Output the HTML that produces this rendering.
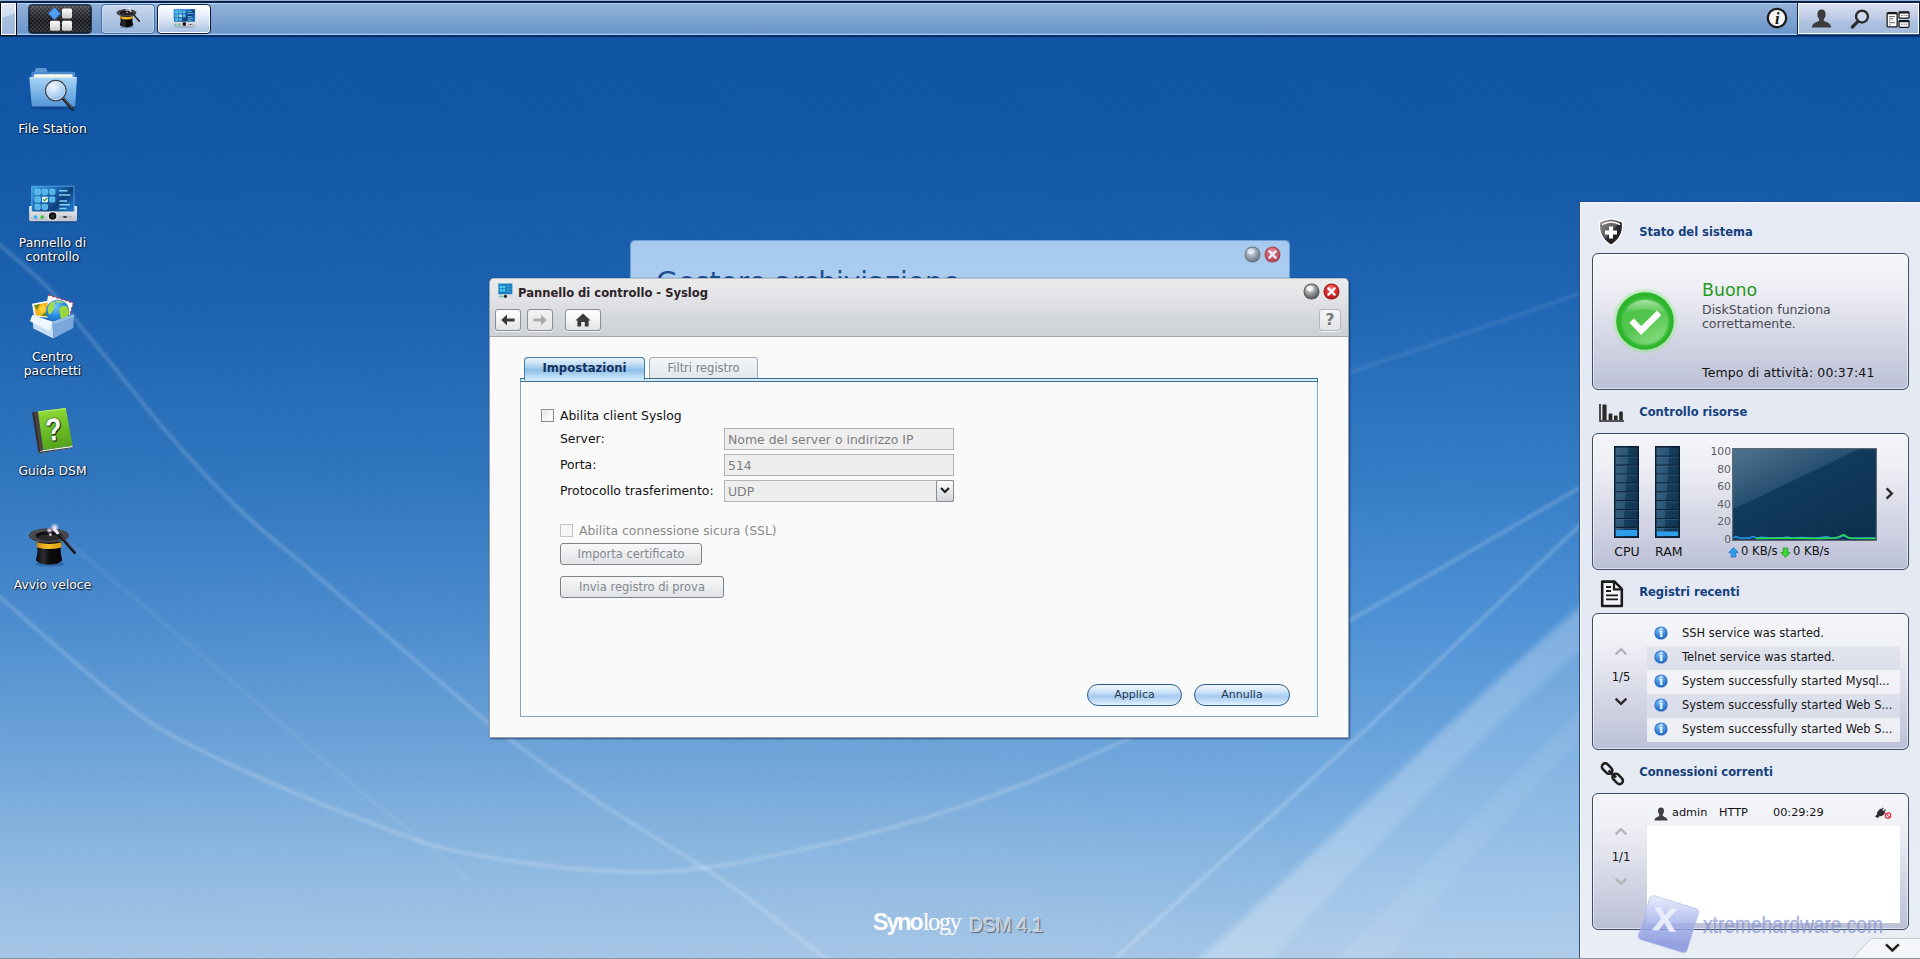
<!DOCTYPE html>
<html lang="it">
<head>
<meta charset="utf-8">
<title>Synology DiskStation</title>
<style>
*{box-sizing:border-box;margin:0;padding:0}
html,body{width:1920px;height:959px;overflow:hidden}
body{position:relative;font-family:"DejaVu Sans","Liberation Sans",sans-serif;font-size:12px;color:#111;
background:linear-gradient(180deg,#0e53a3 0px,#0f56a6 120px,#1a61b0 300px,#2f76c0 480px,#4b8ccf 620px,#70a6da 760px,#93bce3 880px,#a6c7e8 959px);}
.abs{position:absolute}
#stripes{position:absolute;left:0;top:0;width:1920px;height:959px;background:repeating-linear-gradient(135deg,rgba(255,255,255,0.035) 0 2px,rgba(0,0,0,0.03) 2px 4px);}
#bottomline{position:absolute;left:0;top:957.6px;width:1920px;height:2px;background:#8d939d;z-index:50}
/* taskbar */
#taskbar{position:absolute;left:0;top:0;width:1920px;height:38px;background:linear-gradient(180deg,#98aed0 0,#98aed0 1px,#06224a 1.1px,#06224a 2.8px,#b8d6f8 3px,#b8d6f8 4.2px,#93b1d8 4.5px,#80a4d2 18px,#6a96ca 33.4px,#a8ccf4 33.7px,#a8ccf4 34.9px,#06285a 35.2px,#07306a 36.4px,rgba(10,60,130,0.5) 37px,rgba(10,60,130,0) 38px);}

#stripes{background:repeating-linear-gradient(45deg,rgba(255,255,255,0.018) 0 1.5px,rgba(0,0,0,0.016) 1.5px 3px) !important}
.tb{position:absolute;top:4px;height:30px;border-radius:4px}
#showdesk{position:absolute;left:0;top:3px;width:17px;height:33px;border:1px solid #05070c;border-top:none;background:#fff;padding:1px}
#showdesk i{display:block;width:100%;height:100%;background:linear-gradient(160deg,#dfe8f4 0%,#cfdcee 40%,#a9c0e0 41%,#9db7db 100%)}
#mainbtn{left:28px;width:64px;border:1px solid #1d3a66;background:linear-gradient(180deg,#5a5d62 0,#3a3c40 20%,#1c1d20 55%,#2a2c30 100%);box-shadow:inset 0 0 2px #000}
#mainbtn .chk{position:absolute;left:1px;top:1px;right:1px;bottom:1px;border-radius:3px;background:repeating-conic-gradient(rgba(255,255,255,0.09) 0 25%,rgba(0,0,0,0.12) 0 50%) 0 0/4px 4px}
.tbb{border:1px solid #466ea8;background:linear-gradient(180deg,#c9d9ee 0,#b3c8e6 45%,#9ab6dc 100%);box-shadow:inset 0 0 0 1px rgba(255,255,255,0.35)}
.tbb.act{border:1px solid #0b1f45;background:linear-gradient(180deg,#ffffff 0,#e6edf8 40%,#a8c0e2 100%);box-shadow:inset 0 0 0 1px #fff}
#tray{border-bottom:1px solid #2c4f86;position:absolute;left:1797px;top:3px;width:123px;height:32px;border-left:1px solid #10244a;border-right:1px solid #10244a;background:#fff;padding:1px}
#tray i{display:block;width:100%;height:100%;background:linear-gradient(180deg,#d9dff0 0,#c3cfe7 40%,#a9bfdf 70%,#a3badb 100%)}

.dicon{position:absolute;left:0;width:105px;text-align:center;color:#fff;font-size:12.35px;line-height:14px;text-shadow:1px 1px 1px #0a1a30,0 0 2px rgba(0,10,40,0.8)}
.dicon svg{display:block;position:absolute;left:22px;top:0}
.dicon span{position:absolute;left:0;width:105px;top:62px;display:block}

/* back window */
#bwin{position:absolute;left:630px;top:240px;width:660px;height:60px;border-radius:5px 5px 0 0;background:linear-gradient(180deg,#a6c9ef 0,#aecff2 100%);border:1px solid #6e9fd6;border-bottom:none;overflow:hidden}
#bwin .t{position:absolute;left:25px;top:25.4px;font-size:28.03px;line-height:34px;color:#1d4f8e;white-space:nowrap;letter-spacing:0}
.orb{position:absolute;width:17px;height:17px}
/* front window */
#win{position:absolute;left:489px;top:278px;width:860px;height:460px;border-radius:5px 5px 0 0;background:#fafafa;border:1px solid #93a0b0;border-top-color:#b8bdc4;box-shadow:1px 1px 2px rgba(10,30,70,0.55),0 0 1px rgba(10,30,70,0.5)}
#whead{position:absolute;left:0;top:0;width:858px;height:58px;border-radius:4px 4px 0 0;background:linear-gradient(180deg,#e9ebed 0,#e1e3e6 35%,#d3d6da 75%,#cdd0d5 100%);border-bottom:1px solid #a4a8ae}
#wtitle{position:absolute;left:28px;top:6.6px;font-weight:bold;font-size:11.55px;line-height:14px;color:#2d2327;white-space:nowrap}
.nbtn{position:absolute;top:30px;height:22px;border:1px solid #8b8f94;border-radius:3px;background:linear-gradient(180deg,#ffffff 0,#f3f3f4 50%,#e2e3e5 100%);box-shadow:0 1px 0 rgba(255,255,255,0.7)}
#tabstrip{position:absolute;left:30px;top:99px;width:798px;height:4px;background:#cdeefd;border:1px solid #3e6c8a;border-left-color:#5b93b8}
#tpanel{position:absolute;left:30px;top:103px;width:798px;height:335px;border:1px solid #7fa6c2;border-top:none;background:#fafafa;box-shadow:inset -3px 0 0 #eef8fd}
.tab{position:absolute;top:78px;height:22px;border:1px solid #a3abb5;border-bottom:none;border-radius:4px 4px 0 0;font-size:11.45px;line-height:20px;text-align:center;white-space:nowrap}
.tab.on{left:34px;width:121px;font-size:11.65px;border-color:#3f7dab;background:linear-gradient(180deg,#eaf4fc 0,#c9e1f5 25%,#8dbfe9 55%,#b5d9f3 80%,#cfeefd 100%);font-weight:bold;color:#15305c;height:23px;z-index:2}
.tab.off{left:159px;width:109px;background:linear-gradient(180deg,#f3f5f8 0,#e9edf1 60%,#e0e5ea 100%);color:#7d838b}
.lbl{position:absolute;font-size:12.4px;line-height:16px;white-space:nowrap;color:#111}
.cb{position:absolute;width:13px;height:13px;border:1px solid #8e8f8f;background:linear-gradient(135deg,#dcdcdc 0,#f4f4f4 50%,#ffffff 100%);box-shadow:inset 0 0 0 1px #f4f4f4}
.inp{position:absolute;left:234px;width:230px;height:22px;border:1px solid #b3b4b8;background:#eeeeee;font-size:12.45px;line-height:20px;color:#7e7e82;padding:0.7px 0 0 3px;white-space:nowrap}
.gbtn{position:absolute;height:22px;border:1px solid #7f8388;border-radius:3px;background:linear-gradient(180deg,#f7f8f9 0,#eceef0 50%,#dfe2e6 100%);font-size:11.5px;line-height:20px;color:#84888e;text-align:center;white-space:nowrap}
.pbtn{position:absolute;top:405px;height:22px;border:1px solid #2d5d8f;border-radius:12px;background:linear-gradient(180deg,#f1f8fe 0,#d3e7f9 30%,#a5cbef 55%,#c2def6 80%,#e4f2fd 100%);font-size:11px;line-height:20px;color:#27374f;text-align:center;white-space:nowrap}

/* widget panel */
#wp{position:absolute;left:1579px;top:201px;width:342px;height:760px;border:1px solid #1b4b8b;border-left-color:#2c4c78;background:linear-gradient(180deg,#e5eaf4 0,#e3e8f3 50%,#e9edf4 100%);box-shadow:inset 1px 1px 0 #f6f8fc}
.wh{position:absolute;left:59.2px;font-weight:bold;font-size:11.5px;line-height:16px;color:#15407c;white-space:nowrap}
.wb{position:absolute;left:12px;width:317px;height:137px;border:1px solid #3d4d6b;border-radius:6px;background:linear-gradient(180deg,#f5f6fa 0,#eeeff5 25%,#d6d8e6 60%,#bcc0d6 100%);box-shadow:inset 0 0 0 1px rgba(255,255,255,0.55)}
.wt{position:absolute;white-space:nowrap;font-size:12.5px;line-height:16px;color:#111}
.s11{font-size:11.3px}
.row{position:absolute;left:54px;width:253px;height:24px}
.row svg{position:absolute;left:7px;top:4px}
.row span{position:absolute;left:35px;top:2.6px;font-size:11.45px;line-height:16px;color:#161616;white-space:nowrap}

#logo{position:absolute;left:873px;top:906.5px;white-space:nowrap;color:#fff;line-height:30px;height:30px}
#logo .a{font-family:"Liberation Sans",sans-serif;font-weight:bold;font-size:23px;letter-spacing:-1.9px}
#logo .b{font-family:"Liberation Serif",serif;font-size:24.5px;letter-spacing:-1.5px;margin-left:1px}
#logo .c{font-family:"Liberation Sans",sans-serif;font-size:19.5px;letter-spacing:-0.3px;color:#c3ccd9;text-shadow:1px 1px 1px #54627a,-1px -1px 0 rgba(255,255,255,0.55);margin-left:9px;position:relative;top:2px}
</style>
</head>
<body>
<div id="stripes"></div>
<svg id="swoosh" class="abs" style="left:0;top:0" width="1920" height="959" viewBox="0 0 1920 959" fill="none">
<defs><filter id="bl" x="-5%" y="-5%" width="110%" height="110%"><feGaussianBlur stdDeviation="1.6"/></filter><filter id="bl2" x="-5%" y="-5%" width="110%" height="110%"><feGaussianBlur stdDeviation="3"/></filter>
<radialGradient id="gLight" cx="1480" cy="640" r="560" gradientUnits="userSpaceOnUse" gradientTransform="translate(1480 640) scale(1 0.8) translate(-1480 -640)"><stop offset="0" stop-color="#5fb0ff" stop-opacity="0.16"/><stop offset="0.6" stop-color="#5fb0ff" stop-opacity="0.08"/><stop offset="1" stop-color="#5fb0ff" stop-opacity="0"/></radialGradient></defs>
<rect x="800" y="100" width="1120" height="859" fill="url(#gLight)"/>
<g filter="url(#bl)">
<path d="M-10 236 C-8 238 -10 236 0 245 C10 254 33 272 50 290 C67 308 81 327 100 350 C119 373 142 403 165 430 C188 457 216 487 240 510 C264 533 287 550 310 570 C333 590 357 610 380 630 C403 650 430 673 450 690 C470 707 475 713 500 732 C525 751 562 778 600 803 C638 828 687 856 725 882 C763 908 812 949 830 962" stroke="#fff" stroke-opacity="0.2" stroke-width="3.4"/>
<path d="M-20 580 C-17 583 -23 577 0 597 C23 617 87 674 120 700 C153 726 162 731 200 750 C238 769 304 798 350 815 C396 832 425 846 475 855 C525 864 596 873 650 872 C704 871 748 861 800 850 C852 839 906 825 960 807 C1014 789 1060 771 1125 740 C1190 709 1271 664 1350 620 C1429 576 1558 500 1600 476" stroke="#fff" stroke-opacity="0.2" stroke-width="3.6"/>
<path d="M65 540 C150 610 230 680 300 740 S420 840 470 880" stroke="#fff" stroke-opacity="0.07" stroke-width="3"/>
<path d="M1105 968 C1190 890 1270 818 1348 746 S1520 582 1600 506" stroke="#fff" stroke-opacity="0.22" stroke-width="3.4"/>
<path d="M1280 396 C1360 368 1480 330 1600 286" stroke="#fff" stroke-opacity="0.1" stroke-width="3"/>
</g>
<g filter="url(#bl2)">
<path d="M1190 968 C1340 830 1480 690 1600 590 L1600 968 Z" fill="#fff" fill-opacity="0.15"/>
<path d="M1190 968 L1262 968 C1390 830 1500 715 1600 634 L1600 590 C1480 690 1340 830 1190 968 Z" fill="#fff" fill-opacity="0.14"/>
<path d="M1330 968 L1380 968 C1450 880 1530 790 1600 720 L1600 690 C1500 790 1410 880 1330 968 Z" fill="#fff" fill-opacity="0.07"/>
</g>
</svg><div id="bottomline"></div><div id="logo"><span class="a">Syno</span><span class="b">logy</span><span class="c">DSM 4.1</span></div>
<div id="taskbar"></div>
<svg width="0" height="0" style="position:absolute">
<defs>
<linearGradient id="gFolderF" x1="0" y1="0" x2="0" y2="1"><stop offset="0" stop-color="#a9d3f5"/><stop offset="0.5" stop-color="#7db5e8"/><stop offset="1" stop-color="#5596d8"/></linearGradient>
<linearGradient id="gPaper" x1="0" y1="0" x2="0" y2="1"><stop offset="0" stop-color="#fffdf0"/><stop offset="1" stop-color="#e9e3bf"/></linearGradient>
<radialGradient id="gLens" cx="0.35" cy="0.3" r="0.8"><stop offset="0" stop-color="#ffffff" stop-opacity="0.92"/><stop offset="0.55" stop-color="#cfe4f7" stop-opacity="0.7"/><stop offset="1" stop-color="#9cc4ea" stop-opacity="0.55"/></radialGradient>
<linearGradient id="gScreen" x1="0" y1="0" x2="1" y2="0.6"><stop offset="0" stop-color="#3fa2e6"/><stop offset="0.45" stop-color="#1a6cb8"/><stop offset="0.75" stop-color="#0e3f7c"/><stop offset="1" stop-color="#1c6ab4"/></linearGradient>
<linearGradient id="gBase" x1="0" y1="0" x2="0" y2="1"><stop offset="0" stop-color="#f4f4f6"/><stop offset="1" stop-color="#bfc1c9"/></linearGradient>
<linearGradient id="gBook" x1="0" y1="0" x2="0.2" y2="1"><stop offset="0" stop-color="#97de3c"/><stop offset="0.5" stop-color="#72c228"/><stop offset="1" stop-color="#56a41c"/></linearGradient>
<radialGradient id="gGlobe" cx="0.4" cy="0.3" r="0.8"><stop offset="0" stop-color="#7cc8f8"/><stop offset="0.5" stop-color="#2a8be0"/><stop offset="1" stop-color="#145cb0"/></radialGradient>
<linearGradient id="gHatBody" x1="0" y1="0" x2="1" y2="0"><stop offset="0" stop-color="#0a0a0c"/><stop offset="0.3" stop-color="#2c2e34"/><stop offset="0.5" stop-color="#0c0c0e"/><stop offset="1" stop-color="#050506"/></linearGradient>
<linearGradient id="gBand" x1="0" y1="0" x2="1" y2="0"><stop offset="0" stop-color="#c98a10"/><stop offset="0.4" stop-color="#f6c02c"/><stop offset="1" stop-color="#d9980f"/></linearGradient>
<radialGradient id="gSpark" cx="0.5" cy="0.5" r="0.5"><stop offset="0" stop-color="#ffffff" stop-opacity="1"/><stop offset="0.4" stop-color="#f0d8ff" stop-opacity="0.7"/><stop offset="1" stop-color="#ffffff" stop-opacity="0"/></radialGradient>

<radialGradient id="gOrbG" cx="0.4" cy="0.3" r="0.75"><stop offset="0" stop-color="#f2f2f2"/><stop offset="0.35" stop-color="#b2b4b6"/><stop offset="1" stop-color="#505254"/></radialGradient>
<radialGradient id="gOrbR" cx="0.45" cy="0.3" r="0.8"><stop offset="0" stop-color="#ff8d8d"/><stop offset="0.4" stop-color="#e33838"/><stop offset="1" stop-color="#a81414"/></radialGradient>

<radialGradient id="gOK" cx="0.5" cy="0.35" r="0.7"><stop offset="0" stop-color="#8ee27a"/><stop offset="0.45" stop-color="#3fc032"/><stop offset="1" stop-color="#1da018"/></radialGradient>
<radialGradient id="gOKglow" cx="0.5" cy="0.5" r="0.5"><stop offset="0.84" stop-color="#a6f09c" stop-opacity="0.75"/><stop offset="1" stop-color="#7be46c" stop-opacity="0"/></radialGradient>
<radialGradient id="gInfo" cx="0.45" cy="0.3" r="0.8"><stop offset="0" stop-color="#9fd0fa"/><stop offset="0.5" stop-color="#3f8ee0"/><stop offset="1" stop-color="#1b5cb8"/></radialGradient>
<linearGradient id="gShield" x1="0" y1="0" x2="1" y2="1"><stop offset="0" stop-color="#8c8c8e"/><stop offset="0.5" stop-color="#5a5a5c"/><stop offset="0.52" stop-color="#2a2a2c"/><stop offset="1" stop-color="#1c1c1e"/></linearGradient>
<linearGradient id="gGraph" x1="0" y1="0" x2="0.75" y2="1"><stop offset="0" stop-color="#4f7590"/><stop offset="0.42" stop-color="#274f6f"/><stop offset="0.43" stop-color="#113a5b"/><stop offset="1" stop-color="#0c3150"/></linearGradient>
<linearGradient id="gBar" x1="0" y1="0" x2="1" y2="0.25"><stop offset="0" stop-color="#3a6280"/><stop offset="0.55" stop-color="#2a5474"/><stop offset="0.56" stop-color="#163e5e"/><stop offset="1" stop-color="#123654"/></linearGradient>
</defs>
<symbol id="icInfo" viewBox="0 0 14 14"><circle cx="7" cy="7" r="6.6" fill="#2a68c0"/><circle cx="7" cy="7" r="6" fill="url(#gInfo)"/><text x="7" y="11" text-anchor="middle" font-family="Liberation Serif,serif" font-weight="bold" font-size="11.5" fill="#fff">i</text></symbol>
<symbol id="chevU" viewBox="0 0 14 9"><path d="M1.6 7.4 L7 2.2 L12.4 7.4" fill="none" stroke="currentColor" stroke-width="2.4" stroke-linejoin="miter"/></symbol>
<symbol id="chevD" viewBox="0 0 14 9"><path d="M1.6 1.6 L7 6.8 L12.4 1.6" fill="none" stroke="currentColor" stroke-width="2.4" stroke-linejoin="miter"/></symbol>
<symbol id="meter" viewBox="0 0 26 92"><rect x="0" y="0" width="26" height="92" fill="#0a1d30"/><rect x="1.5" y="1.5" width="23" height="89" fill="url(#gBar)"/><path d="M1.5 10.2H24.5M1.5 19.1H24.5M1.5 28H24.5M1.5 36.9H24.5M1.5 45.8H24.5M1.5 54.7H24.5M1.5 63.6H24.5M1.5 72.5H24.5M1.5 81.4H24.5" stroke="#0b2238" stroke-width="1.2"/><path d="M1.5 11.2H24.5M1.5 20.1H24.5M1.5 29H24.5M1.5 37.9H24.5M1.5 46.8H24.5M1.5 55.7H24.5M1.5 64.6H24.5M1.5 73.5H24.5M1.5 82.4H24.5" stroke="#4b7290" stroke-width="0.6" opacity="0.7"/></symbol>

<symbol id="orbG" viewBox="0 0 17 17"><circle cx="8.5" cy="8.5" r="8" fill="#54575a"/><circle cx="8.5" cy="8.5" r="7" fill="url(#gOrbG)"/><ellipse cx="7" cy="5.6" rx="3.4" ry="2.6" fill="#fff" opacity="0.75"/></symbol>
<symbol id="orbR" viewBox="0 0 17 17"><circle cx="8.5" cy="8.5" r="8" fill="#a01818"/><circle cx="8.5" cy="8.5" r="7" fill="url(#gOrbR)"/><path d="M5.4 5.4 L11.6 11.6 M11.6 5.4 L5.4 11.6" stroke="#fff" stroke-width="2.3" stroke-linecap="round"/></symbol>
<symbol id="icCtlS" viewBox="0 0 17 17"><rect x="1.5" y="0.8" width="13.6" height="11" fill="#1c7aba" stroke="#4aa4dc" stroke-width="0.6"/><path d="M3 3h2v2h-2zM6 3h2v2h-2zM3 6.4h2v2h-2zM6 6.4h2v2h-2zM9.6 3.4h4M9.6 6h4M9.6 8.6h4" fill="#46d2f2" stroke="#46d2f2" stroke-width="0.6"/><rect x="0.6" y="11.2" width="15.4" height="4.2" rx="0.8" fill="#dcdde2"/><circle cx="8.4" cy="13.2" r="1.5" fill="#18181a"/><circle cx="3.2" cy="13.4" r="0.8" fill="#35b0ee"/><circle cx="5.3" cy="13.4" r="0.8" fill="#3cc63e"/></symbol>

<symbol id="icFile" viewBox="0 0 60 60">
<ellipse cx="31" cy="47.5" rx="23" ry="1.8" fill="#062a5c" opacity="0.35"/>
<path d="M12.6 12.5 L13.4 8.8 Q13.6 8 14.6 8 L23.4 8 Q24.3 8 24.6 8.9 L25.6 12.5 Z" fill="#5c9ad6"/>
<rect x="9.4" y="11.8" width="43.8" height="30" rx="1.6" fill="#4b8cd0"/>
<rect x="12" y="14.2" width="38.6" height="7" rx="1.2" fill="url(#gPaper)"/>
<path d="M7.3 17.6 Q7.2 17.2 7.8 17.2 L54.6 17.2 Q55.1 17.2 55 17.8 L53.2 45.4 Q53.1 46.4 52.2 46.4 L10.8 46.4 Q9.9 46.4 9.8 45.4 Z" fill="url(#gFolderF)"/>
<path d="M7.8 17.7 L54.6 17.7" stroke="#d6ecfc" stroke-width="0.8"/>
<line x1="41" y1="38.5" x2="50.6" y2="49.2" stroke="#1c1c24" stroke-width="2.9" stroke-linecap="round"/>
<line x1="41.6" y1="38.4" x2="50.4" y2="48.2" stroke="#8a8a98" stroke-width="0.8" stroke-linecap="round"/>
<circle cx="33.8" cy="30.6" r="10.2" fill="url(#gLens)"/>
<circle cx="33.8" cy="30.6" r="10.2" fill="none" stroke="#3b404c" stroke-width="1.3"/>
<circle cx="33.8" cy="30.6" r="9.2" fill="none" stroke="#e8eef6" stroke-width="0.7" opacity="0.9"/>
</symbol>
<symbol id="icCtl" viewBox="0 0 60 60">
<ellipse cx="31" cy="47.6" rx="24" ry="1.5" fill="#062a5c" opacity="0.35"/>
<rect x="9.7" y="12.2" width="42.3" height="26.5" fill="url(#gScreen)" stroke="#58aee8" stroke-width="0.8"/>
<g fill="#49b3e6" stroke="#8fd6f6" stroke-width="0.7">
<rect x="13.2" y="15.3" width="5" height="5" rx="0.8"/><rect x="20.4" y="15.3" width="5" height="5" rx="0.8"/><rect x="27.8" y="15.3" width="5" height="5" rx="0.8"/>
<rect x="13.2" y="23" width="5" height="5" rx="0.8"/><rect x="27.8" y="23" width="5" height="5" rx="0.8"/>
<rect x="13.2" y="30.4" width="5" height="5" rx="0.8"/><rect x="20.4" y="30.4" width="5" height="5" rx="0.8"/>
</g>
<rect x="20.2" y="22.8" width="5.6" height="5.4" rx="0.8" fill="#f2fbff"/>
<path d="M21.3 25.3 L22.7 26.9 L25 23.9" fill="none" stroke="#1f8a3c" stroke-width="1.2"/>
<g stroke="#86d3f6" stroke-width="1.5"><path d="M37 16.7H45.5M37 20.9H48.5M37.4 27H45M37.4 30.8H48M37.4 34.5H44.5"/></g>
<path d="M7.2 33 Q7.2 32 8.2 32 L9.6 32 L9.6 37.6 L52.4 37.6 L52.4 32 L54 32 Q55 32 55 33 L55 46 Q55 47.2 53.8 47.2 L8.4 47.2 Q7.2 47.2 7.2 46 Z" fill="url(#gBase)"/>
<circle cx="13.5" cy="43.1" r="1.9" fill="#35b0ee"/><circle cx="20.3" cy="43.1" r="1.9" fill="#3cc63e"/>
<circle cx="30.6" cy="42" r="4.7" fill="#f4f4f6"/><circle cx="30.6" cy="42" r="3.8" fill="#141416"/><circle cx="30.6" cy="42" r="1.6" fill="#2e2e33"/>
<path d="M37.8 42.9H50" stroke="#a9abb3" stroke-width="1.2"/><rect x="41.4" y="42.2" width="3.2" height="1.5" fill="#1a1a1e"/>
</symbol>
<symbol id="icPkg" viewBox="0 0 60 60">
<path d="M26.2 6.9 L51.3 15 L47.6 27 L24 18.5 Z" fill="#fbfbfd"/>
<path d="M26.2 6.9 L51.3 15" stroke="#d4283c" stroke-width="1.4" stroke-dasharray="2 2.4"/>
<path d="M51.3 15 L47.6 27" stroke="#d4283c" stroke-width="1.2" stroke-dasharray="2 2.4"/>
<path d="M10 15.8 L26.8 12.4 L28.4 30 L12.2 28.5 Z" fill="#fafafa"/>
<path d="M12 17.2 L25.5 14.4 L26.8 28.6 L13.6 27.4 Z" fill="#f4b81a"/>
<path d="M12 17.2 L18 16 L15 22 Z M19 27.8 L26.8 28.6 L26 22 Z" fill="#6e8c1c"/>
<path d="M17 20 L22 17 L24 22 L20 26 Z" fill="#ffd23a"/>
<circle cx="35.6" cy="23.3" r="11.6" fill="url(#gGlobe)"/>
<path d="M27 17 Q29 14 32.5 13.2 Q33.5 15.5 31.5 18 Q33 21 30 23.5 Q28.5 27 26.8 26 Q24.5 22 27 17 Z" fill="#a6dc48"/>
<path d="M38 19.5 Q41 16.5 45 18.5 Q47.8 22 46.5 27 Q44 31 40 31.5 Q37.5 30 38.5 26.5 Q36 23 38 19.5 Z" fill="#9cd63e"/>
<path d="M33 13 Q38 11.5 42 14.5 Q38.5 15.5 35.5 14.8 Z" fill="#b5e25c" opacity="0.8"/>
<path d="M10.3 26.9 L30.6 33.8 L31.3 50.6 L11.3 40.6 Z" fill="#c6def4"/>
<path d="M30.6 33.8 L51.9 26.2 L51.3 40 L31.3 50.6 Z" fill="#7aa8dc"/>
<path d="M30.6 33.8 L51.9 26.2 L51.8 29 L30.7 36.8 Z" fill="#94bce6"/>
<path d="M8 33.2 L10.3 26.9 L30.6 33.8 L27.6 43.2 Z" fill="#eef6fd"/>
</symbol>
<symbol id="icHelp" viewBox="0 0 60 60">
<path d="M16.5 50 L21.3 48.1 L50.6 43.8 L50.2 45.8 L17.2 51.2 Z" fill="#e9ebe6"/>
<path d="M16.5 50 L17.2 51.4 L50.3 46 L50.2 45.2 Z" fill="#3c3c3c"/>
<path d="M10.3 10.6 L16 9.4 L21.3 48.1 L16.5 50 Z" fill="#4b4242"/>
<path d="M10.3 10.6 L12 10.2 L17.8 49.4 L16.5 50 Z" fill="#2c2626"/>
<path d="M16 9.4 L43.8 6 L50.6 43.8 L21.3 48.1 Z" fill="url(#gBook)"/>
<path d="M16 9.4 L43.8 6 L44 7 L16.2 10.4 Z" fill="#b8ec6a"/>
<text transform="translate(32.6 38.2) rotate(-5) scale(0.84 1)" text-anchor="middle" font-family="Liberation Sans,sans-serif" font-weight="bold" font-size="31.5" fill="#fbfff4">?</text>
</symbol>
<symbol id="icHat" viewBox="0 0 60 60">
<ellipse cx="28" cy="48" rx="14" ry="2.4" fill="#062a5c" opacity="0.35"/>
<path d="M14.6 26 Q16.6 36 13.8 44.2 Q17 48.4 27 48.4 Q37 48.4 40.4 44.2 Q37.4 36 39.6 26 Z" fill="url(#gHatBody)"/>
<path d="M14.7 26.2 Q27 29.6 39.6 26.2 L39.4 31.6 Q27 34.6 15.2 31.6 Z" fill="url(#gBand)"/>
<ellipse cx="26.9" cy="19.6" rx="20" ry="7.3" fill="#3b3b3e"/>
<ellipse cx="26.9" cy="19.1" rx="19.4" ry="6.6" fill="#4a4a4e"/>
<ellipse cx="26.9" cy="19.8" rx="13.2" ry="4.6" fill="#111113"/>
<ellipse cx="26.9" cy="21.2" rx="11" ry="2.8" fill="#2a2a2d"/>
<line x1="35" y1="16.2" x2="52.6" y2="36.4" stroke="#0e0e10" stroke-width="2.9" stroke-linecap="round"/>
<line x1="35.8" y1="16.2" x2="52.6" y2="35.4" stroke="#6b6b72" stroke-width="0.8" stroke-linecap="round"/>
<line x1="32.6" y1="13.4" x2="35.6" y2="16.9" stroke="#efe2ff" stroke-width="3" stroke-linecap="round"/>
<circle cx="32.6" cy="11.6" r="4.6" fill="url(#gSpark)"/>
<circle cx="27.4" cy="14.4" r="3" fill="url(#gSpark)"/>
<circle cx="28.4" cy="18.6" r="2.2" fill="url(#gSpark)"/>
</symbol>
</svg>

<div class="dicon" style="top:60px"><svg width="60" height="60"><use href="#icFile"/></svg><span>File Station</span></div>
<div class="dicon" style="top:174px"><svg width="60" height="60"><use href="#icCtl"/></svg><span>Pannello di<br>controllo</span></div>
<div class="dicon" style="top:288px"><svg width="60" height="60"><use href="#icPkg"/></svg><span>Centro<br>pacchetti</span></div>
<div class="dicon" style="top:402px"><svg width="60" height="60"><use href="#icHelp"/></svg><span>Guida DSM</span></div>
<div class="dicon" style="top:516px"><svg width="60" height="60"><use href="#icHat"/></svg><span>Avvio veloce</span></div>

<div id="bwin"><div class="t">Gestore archiviazione</div>
<svg class="orb" style="left:613px;top:5px;opacity:0.72" viewBox="0 0 17 17"><use href="#orbG"/></svg>
<svg class="orb" style="left:633px;top:5px;opacity:0.72" viewBox="0 0 17 17"><use href="#orbR"/></svg>
</div>
<div id="win">
<div id="whead">
<svg class="abs" style="left:7px;top:4px" width="17" height="17"><use href="#icCtlS"/></svg>
<div id="wtitle">Pannello di controllo - Syslog</div>
<svg class="orb" style="left:813px;top:4px" viewBox="0 0 17 17"><use href="#orbG"/></svg>
<svg class="orb" style="left:833px;top:4px" viewBox="0 0 17 17"><use href="#orbR"/></svg>
<div class="nbtn" style="left:5px;width:26px"><svg width="24" height="20" viewBox="0 0 24 20"><path d="M5.2 10 L11 4.6 L11 8.4 L18.6 8.4 L18.6 11.6 L11 11.6 L11 15.4 Z" fill="#3a3a3c"/></svg></div>
<div class="nbtn" style="left:37px;width:26px;background:linear-gradient(180deg,#f4f4f5 0,#e4e5e7 100%)"><svg width="24" height="20" viewBox="0 0 24 20"><path d="M18.8 10 L13 4.6 L13 8.4 L5.4 8.4 L5.4 11.6 L13 11.6 L13 15.4 Z" fill="#a9abae"/></svg></div>
<div class="nbtn" style="left:75px;width:36px"><svg width="34" height="20" viewBox="0 0 34 20"><path d="M17 3.4 L24.6 10.6 L22.6 10.6 L22.6 16.4 L18.8 16.4 L18.8 12 L15.2 12 L15.2 16.4 L11.4 16.4 L11.4 10.6 L9.4 10.6 Z" fill="#3a3a3c"/></svg></div>
<div class="nbtn" style="left:829px;width:22px;background:linear-gradient(180deg,#f4f5f6 0,#e2e4e7 100%);border-color:#b4b8bd;font-weight:bold;font-size:16px;line-height:20px;text-align:center;color:#77797d">?</div>
</div>
<div class="tab on">Impostazioni</div>
<div class="tab off">Filtri registro</div>
<div id="tabstrip"></div>
<div id="tpanel"></div>
<div class="cb" style="left:51px;top:130px"></div>
<div class="lbl" style="left:70px;top:129px">Abilita client Syslog</div>
<div class="lbl" style="left:70px;top:152px">Server:</div>
<div class="inp" style="top:149px">Nome del server o indirizzo IP</div>
<div class="lbl" style="left:70px;top:178px">Porta:</div>
<div class="inp" style="top:175px">514</div>
<div class="lbl" style="left:70px;top:204px">Protocollo trasferimento:</div>
<div class="inp" style="top:201px">UDP<div style="position:absolute;right:-1px;top:-1px;width:18px;height:22px;border:1px solid #8a8d92;border-radius:2px;background:linear-gradient(180deg,#fdfdfd 0,#e6e7e9 55%,#d4d6d9 100%)"><svg width="16" height="20" viewBox="0 0 16 20"><path d="M4 7 L8 11 L12 7" fill="none" stroke="#222" stroke-width="2.2"/></svg></div></div>
<div class="cb" style="left:70px;top:245px;border-color:#c4c5c6;background:#f6f6f6"></div>
<div class="lbl" style="left:89px;top:244px;color:#8a8a8a">Abilita connessione sicura (SSL)</div>
<div class="gbtn" style="left:70px;top:264px;width:142px">Importa certificato</div>
<div class="gbtn" style="left:70px;top:297px;width:164px">Invia registro di prova</div>
<div class="pbtn" style="left:597px;width:95px">Applica</div>
<div class="pbtn" style="left:704px;width:96px">Annulla</div>
</div>

<div id="wp">
<svg class="abs" style="left:18px;top:15.4px" width="26" height="30" viewBox="0 0 26 30"><path d="M13 0.8 Q19 1.2 25.2 4.4 C26.4 16 22 23.5 13 29.2 C4 23.5 -0.4 16 0.8 4.4 Q7 1.2 13 0.8Z" fill="#fff" opacity="0.9"/><path d="M13 2.4 Q18.4 2.8 23.8 5.4 C24.8 15.4 21 22.2 13 27.4 C5 22.2 1.2 15.4 2.2 5.4 Q7.6 2.8 13 2.4Z" fill="url(#gShield)"/><path d="M3.8 7.6 Q13 2.4 22.2 7.6" fill="none" stroke="#fff" stroke-width="1.3"/><path d="M11 9.6H15V13.6H19V17.6H15V21.6H11V17.6H7V13.6H11Z" fill="#fff"/></svg>
<div class="wh" style="top:22px">Stato del sistema</div>
<div class="wb" style="top:51px">
<svg class="abs" style="left:13.4px;top:28.3px" width="78" height="78" viewBox="0 0 78 78"><defs><linearGradient id="gOKin" x1="0.2" y1="0" x2="0.8" y2="1"><stop offset="0" stop-color="#49c245"/><stop offset="0.5" stop-color="#55c650"/><stop offset="1" stop-color="#8cdf86"/></linearGradient><filter id="blOK" x="-10%" y="-10%" width="120%" height="120%"><feGaussianBlur stdDeviation="1.3"/></filter><linearGradient id="gOKgl" x1="0" y1="0" x2="0" y2="1"><stop offset="0" stop-color="#fff" stop-opacity="0.5"/><stop offset="1" stop-color="#fff" stop-opacity="0"/></linearGradient></defs><circle cx="39" cy="39" r="33" fill="url(#gOKglow)"/><circle cx="39" cy="39" r="28.8" fill="#2db52d"/><circle cx="39" cy="39.4" r="23.6" fill="url(#gOKin)" filter="url(#blOK)"/><path d="M18.5 32 A21 18 0 0 1 59.5 32 Q39 23 18.5 32Z" fill="url(#gOKgl)"/><path d="M25.6 38.6 L35.2 48.6 L53.2 30.8" fill="none" stroke="#fff" stroke-width="6.2"/></svg>
<div class="wt" style="left:109px;top:24.5px;font-size:17.4px;line-height:22px;color:#279a1d">Buono</div>
<div class="wt" style="left:109px;top:48.5px;color:#4a4a52;line-height:14.4px">DiskStation funziona<br>correttamente.</div>
<div class="wt" style="left:109px;top:110.6px;letter-spacing:0.13px">Tempo di attività: 00:37:41</div>
</div>
<svg class="abs" style="left:19px;top:202px" width="26" height="18" viewBox="0 0 26 18"><path d="M1 0V17H25" fill="none" stroke="#222" stroke-width="1.6"/><path d="M3.4 16V1.4Q3.4 0.6 4.2 0.6H6.8Q7.6 0.6 7.6 1.4V16ZM9.6 16V10.4Q9.6 9.6 10.4 9.6H12.6Q13.4 9.6 13.4 10.4V16ZM15 16V12.4Q15 11.6 15.8 11.6H17.8Q18.6 11.6 18.6 12.4V16ZM20.2 16V8.4Q20.2 7.6 21 7.6H23Q23.8 7.6 23.8 8.4V16Z" fill="#2a2a2a"/></svg>
<div class="wh" style="top:202px">Controllo risorse</div>
<div class="wb" style="top:231px">
<svg class="abs" style="left:21px;top:12px" width="25" height="92" preserveAspectRatio="none" viewBox="0 0 26 92"><use href="#meter"/><rect x="2" y="84" width="22" height="6" fill="#2d9dec"/></svg>
<svg class="abs" style="left:62px;top:12px" width="25" height="92" preserveAspectRatio="none" viewBox="0 0 26 92"><use href="#meter"/><rect x="2" y="85.5" width="22" height="4.5" fill="#2d9dec"/></svg>
<div class="wt" style="left:21px;top:110px;width:26px;text-align:center">CPU</div>
<div class="wt" style="left:62px;top:110px;width:26px;text-align:center">RAM</div>
<div class="wt s11" style="left:108px;top:9px;width:30px;text-align:right;color:#5e5e62;font-size:10.8px;line-height:17.6px;white-space:normal">100<br>80<br>60<br>40<br>20<br>0</div>
<svg class="abs" style="left:139px;top:14px" width="145" height="93" viewBox="0 0 147 93" preserveAspectRatio="none"><rect x="0.5" y="0.5" width="146" height="92" fill="url(#gGraph)" stroke="#5c6670" stroke-width="1.4"/><path d="M1.5 90 L4 88.4 L7 90 L18 90 L21 88.6 L25 90 L30 89.4 L40 90 L52 89.8 L56 89 L60 90 L70 89.6 L85 90 L92 89.4 L96 88.6 L100 90 L108 89.6 L113 87.6 L118 90 L145.5 90" fill="none" stroke="#2a9ae8" stroke-width="1.6"/><path d="M24 90.6 L60 90.2 L90 90.4 L104 90 L108 89 L113 86.6 L118 89.6 L122 90.2 L145.5 90.4" fill="none" stroke="#2edc4a" stroke-width="1.5"/></svg>
<svg class="abs" style="left:292px;top:53px;color:#2a2a2a" width="9" height="13" viewBox="0 0 9 13"><path d="M1.6 1.4 L6.8 6.5 L1.6 11.6" fill="none" stroke="currentColor" stroke-width="2.4"/></svg>
<svg class="abs" style="left:135px;top:113px" width="11" height="11" viewBox="0 0 11 11"><path d="M5.5 0.6 L10.2 5.4 L7.8 5.4 L7.8 10 L3.2 10 L3.2 5.4 L0.8 5.4 Z" fill="#2d9df0" stroke="#1a6cc0" stroke-width="0.8"/></svg>
<div class="wt s11" style="left:148px;top:109px;font-size:11.6px">0 KB/s</div>
<svg class="abs" style="left:187px;top:113px" width="11" height="11" viewBox="0 0 11 11"><path d="M5.5 10.4 L10.2 5.6 L7.8 5.6 L7.8 1 L3.2 1 L3.2 5.6 L0.8 5.6 Z" fill="#3ed63a" stroke="#1f9a22" stroke-width="0.8"/></svg>
<div class="wt s11" style="left:200px;top:109px;font-size:11.6px">0 KB/s</div>
</div>
<svg class="abs" style="left:20px;top:378px" width="24" height="28" viewBox="0 0 24 28"><path d="M2.2 1.6 H14.6 L21.8 8.8 V26 H2.2 Z" fill="#f4f5f8" stroke="#1c1c1c" stroke-width="2.6" stroke-linejoin="round"/><path d="M14 1.6 V9.4 H21.8" fill="none" stroke="#1c1c1c" stroke-width="2.2"/><path d="M6 7H11M6 11H11M6 15.4H18M6 19.4H18" stroke="#1c1c1c" stroke-width="1.8"/></svg>
<div class="wh" style="top:382px">Registri recenti</div>
<div class="wb" style="top:411px">
<svg class="abs" style="left:21px;top:33px;color:#b2b4ba" width="14" height="9"><use href="#chevU"/></svg>
<div class="wt s11" style="left:14px;top:55px;width:28px;text-align:center;font-size:11.6px">1/5</div>
<svg class="abs" style="left:21px;top:83px;color:#2c2c2e" width="14" height="9"><use href="#chevD"/></svg>
<div class="row" style="top:8px;background:rgba(255,255,255,0.12)"><svg width="14" height="14"><use href="#icInfo"/></svg><span>SSH service was started.</span></div>
<div class="row" style="top:32px;background:rgba(214,218,230,0.55)"><svg width="14" height="14"><use href="#icInfo"/></svg><span>Telnet service was started.</span></div>
<div class="row" style="top:56px;background:rgba(255,255,255,0.6)"><svg width="14" height="14"><use href="#icInfo"/></svg><span>System successfully started Mysql...</span></div>
<div class="row" style="top:80px;background:rgba(222,226,237,0.75)"><svg width="14" height="14"><use href="#icInfo"/></svg><span>System successfully started Web S...</span></div>
<div class="row" style="top:104px;background:rgba(255,255,255,0.7)"><svg width="14" height="14"><use href="#icInfo"/></svg><span>System successfully started Web S...</span></div>
</div>
<svg class="abs" style="left:19px;top:560px" width="28" height="28" viewBox="0 0 28 28"><g fill="none" stroke="#1e1e1e" stroke-width="2.5"><rect x="-6" y="-3.4" width="12" height="6.8" rx="3.4" transform="translate(8.1 6.6) rotate(45)"/><rect x="-6" y="-3.4" width="12" height="6.8" rx="3.4" transform="translate(18.7 16.9) rotate(45)"/><path d="M9.6 8.4 L17 15.4" stroke-width="2.8"/></g></svg>
<div class="wh" style="top:562px">Connessioni correnti</div>
<div class="wb" style="top:591px">
<div class="abs" style="left:54px;top:32px;width:253px;height:97px;background:#fff"></div>
<div class="abs" style="left:54px;top:8px;width:253px;height:24px;background:rgba(255,255,255,0.12)"></div>
<svg class="abs" style="left:61px;top:13px" width="14" height="14" viewBox="0 0 14 14"><path d="M7 0.6 Q10 0.6 10 4 Q10 6.4 8.6 7.6 Q8.4 8.8 9.6 9.4 Q13.4 10.6 13.6 13.4 H0.4 Q0.6 10.6 4.4 9.4 Q5.6 8.8 5.4 7.6 Q4 6.4 4 4 Q4 0.6 7 0.6Z" fill="#3f3f41"/></svg>
<div class="wt s11" style="left:79px;top:10.8px;font-size:11.3px">admin</div>
<div class="wt s11" style="left:126px;top:10.8px;font-size:11.3px">HTTP</div>
<div class="wt s11" style="left:180px;top:10.8px;font-size:11.3px">00:29:29</div>
<svg class="abs" style="left:281px;top:12px" width="18" height="14" viewBox="0 0 18 14"><path d="M1 10.6 L3 8.4 Q2.4 6 4.6 4.6 L6.4 2.4 L7.4 3.2 L8.8 1.4 L9.8 2.2 L8.4 4 L9.6 5 L11 3.2 L12 4 L10.6 5.8 L11.4 6.6 L9.6 8.8 Q8 10.6 5.8 10 L3.8 12 Z" fill="#2e2e30"/><circle cx="14" cy="9.6" r="2.7" fill="#fff" stroke="#d8283a" stroke-width="1.2"/><path d="M12.2 7.8 L15.8 11.4" stroke="#d8283a" stroke-width="1.1"/></svg>
<svg class="abs" style="left:21px;top:33px;color:#b2b4ba" width="14" height="9"><use href="#chevU"/></svg>
<div class="wt s11" style="left:14px;top:55px;width:28px;text-align:center;font-size:11.6px">1/1</div>
<svg class="abs" style="left:21px;top:83px;color:#b2b4ba" width="14" height="9"><use href="#chevD"/></svg>
</div>
<svg class="abs" style="left:266px;top:733px" width="76" height="26" viewBox="0 0 76 26"><path d="M4 26 L25 3.5 L76 3.5 L76 26 Z" fill="#f4f6fa"/><path d="M4 26 L25 3.5 L76 3.5" fill="none" stroke="#c5c9d2" stroke-width="1"/><path d="M40 9.4 L46.4 15.4 L52.8 9.4" fill="none" stroke="#222" stroke-width="2.6"/></svg>
</div>
<div id="showdesk"><i></i></div>
<div id="mainbtn" class="tb"><div class="chk"></div>
<svg class="abs" style="left:14px;top:0" width="36" height="30" viewBox="0 0 36 30">
<defs><linearGradient id="sq" x1="0" y1="0" x2="0" y2="1"><stop offset="0" stop-color="#ffffff"/><stop offset="1" stop-color="#c9cacc"/></linearGradient></defs>
<path d="M11.5 2.2 L17.6 8.5 L11.5 14.8 L5.4 8.5 Z" fill="#4da0f6" stroke="#2d6fc0" stroke-width="0.8" stroke-linejoin="round"/>
<rect x="19" y="3.5" width="10" height="10" rx="1.6" fill="url(#sq)"/>
<rect x="7" y="15.8" width="10" height="10" rx="1.6" fill="url(#sq)"/>
<rect x="19" y="15.8" width="10" height="10" rx="1.6" fill="url(#sq)"/>
</svg></div>
<div class="tb tbb" style="left:101px;width:54px"></div>
<div class="tb tbb act" style="left:157px;width:54px"></div>
<div id="tray"><i></i></div>


<svg class="abs" style="left:113px;top:3px" width="30" height="30"><use href="#icHat"/></svg>
<svg class="abs" style="left:169px;top:3px" width="30" height="30"><use href="#icCtl"/></svg>
<svg class="abs" style="left:1766px;top:7px" width="22" height="22" viewBox="0 0 22 22"><circle cx="11" cy="11" r="9.2" fill="#f6f6f6" stroke="#1b1b1d" stroke-width="2.3"/><text x="11.2" y="17" text-anchor="middle" font-family="Liberation Serif,serif" font-style="italic" font-weight="bold" font-size="16.4" fill="#141416">i</text></svg>
<svg class="abs" style="left:1811px;top:9px" width="21" height="19" viewBox="0 0 21 19"><path d="M10.5 0.6 Q14.6 0.6 14.6 5.4 Q14.6 8.6 12.7 10.2 Q12.5 11.8 14 12.6 Q19.8 14.2 20.2 18.6 H0.8 Q1.2 14.2 7 12.6 Q8.5 11.8 8.3 10.2 Q6.4 8.6 6.4 5.4 Q6.4 0.6 10.5 0.6Z" fill="#3b3b3d"/></svg>
<svg class="abs" style="left:1849px;top:8px" width="22" height="22" viewBox="0 0 22 22"><path d="M9.2 13.2 L3.4 19" stroke="#2c2c2e" stroke-width="3.2" stroke-linecap="round"/><circle cx="13" cy="8.6" r="5.9" fill="rgba(255,255,255,0.25)" stroke="#2c2c2e" stroke-width="2.4"/></svg>
<svg class="abs" style="left:1885.5px;top:10.6px" width="24" height="17.3" viewBox="0 0 25 18"><g fill="#fbfbfc" stroke="#161618" stroke-width="1.3"><rect x="1.2" y="1.8" width="10.4" height="14.8" rx="1"/><rect x="13.6" y="0.8" width="10.4" height="6.6" rx="1"/><rect x="13.6" y="10" width="10.4" height="7" rx="1"/></g><path d="M1.2 2.6H11.6M13.6 1.6H24M13.6 10.8H24" stroke="#161618" stroke-width="1.8"/><path d="M3.2 5.8H9.4M3.2 8H7.4M3.2 10.2H4.6M3.2 12.2H9.4M3.2 14.4H4.6M15.6 4.6H17M18.2 4.6H19.6M20.8 4.6H22.2M15.6 13.8H17M18.2 13.8H19.6M20.8 13.8H22.2" stroke="#555" stroke-width="0.9"/></svg>
<svg id="wm" class="abs" style="left:1630px;top:888px" width="262" height="71" viewBox="0 0 262 71">
<defs><linearGradient id="gWm" x1="0" y1="0" x2="0.3" y2="1"><stop offset="0" stop-color="#e8eefc" stop-opacity="0.9"/><stop offset="0.5" stop-color="#a8b6ec" stop-opacity="0.8"/><stop offset="1" stop-color="#7f8fdc" stop-opacity="0.8"/></linearGradient></defs>
<g transform="translate(38 36) rotate(17)"><rect x="-25" y="-23" width="51" height="46" rx="4" fill="url(#gWm)" stroke="#b8c2e8" stroke-opacity="0.8" stroke-width="1"/><text transform="translate(-2 8) rotate(-12)" text-anchor="middle" font-family="Liberation Sans,sans-serif" font-weight="bold" font-size="44" fill="#eef1fc" fill-opacity="0.92">x</text></g>
<text x="73" y="45" font-family="Liberation Sans,sans-serif" font-size="24" fill="#8494cf" fill-opacity="0.68" textLength="180" lengthAdjust="spacingAndGlyphs" stroke="#8494cf" stroke-opacity="0.5" stroke-width="0.5">xtremehardware.com</text>
</svg></body>
</html>
